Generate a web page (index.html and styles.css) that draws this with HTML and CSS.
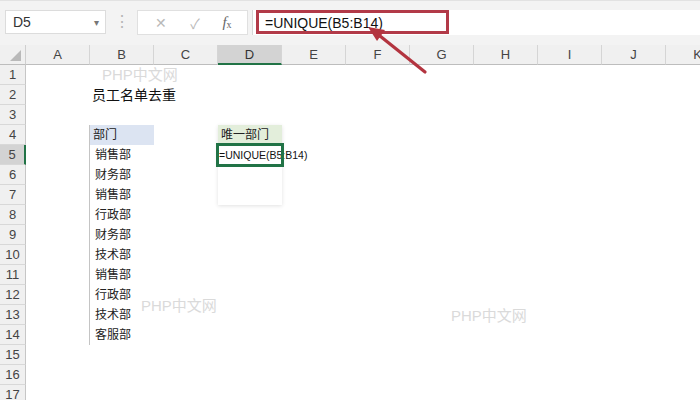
FILE: index.html
```html
<!DOCTYPE html>
<html lang="zh-CN">
<head>
    <meta charset="UTF-8">
    <title>UNIQUE</title>
    <link rel="stylesheet" href="styles.css">
</head>
<body>
    <div class="toolbar">
        <div class="namebox">
            <span>D5</span>
            <span class="caret">&#9662;</span>
        </div>
        <div class="dots">&#8942;</div>
        <div class="fbtns">
            <span class="fbtn">&#10005;</span>
            <span class="fbtn">&#10003;</span>
            <span class="fbtn fx"><i>f</i><sub>x</sub></span>
        </div>
        <div class="formula">
            <span class="ftext">=UNIQUE(B5:B14)</span>
            <div class="redbox"></div>
        </div>
    </div>

    <div class="sheet">
        <div class="corner"><span class="tri"></span></div>
        <div class="ch">A</div>
        <div class="ch">B</div>
        <div class="ch">C</div>
        <div class="ch sel">D</div>
        <div class="ch">E</div>
        <div class="ch">F</div>
        <div class="ch">G</div>
        <div class="ch">H</div>
        <div class="ch">I</div>
        <div class="ch">J</div>
        <div class="ch">K</div>

        <div class="rh">1</div>
        <div class="rh">2</div>
        <div class="cell colB title">员工名单去重</div>
        <div class="rh">3</div>
        <div class="rh">4</div>
        <div class="cell colB dept head-blue">部门</div>
        <div class="cell colD head-green">唯一部门</div>
        <div class="rh sel">5</div>
        <div class="cell colB dept">销售部</div>
        <div class="cell colD active">=UNIQUE(B5:B14)</div>
        <div class="rh">6</div>
        <div class="cell colB dept">财务部</div>
        <div class="rh">7</div>
        <div class="cell colB dept">销售部</div>
        <div class="rh">8</div>
        <div class="cell colB dept">行政部</div>
        <div class="rh">9</div>
        <div class="cell colB dept">财务部</div>
        <div class="rh">10</div>
        <div class="cell colB dept">技术部</div>
        <div class="rh">11</div>
        <div class="cell colB dept">销售部</div>
        <div class="rh">12</div>
        <div class="cell colB dept">行政部</div>
        <div class="rh">13</div>
        <div class="cell colB dept">技术部</div>
        <div class="rh">14</div>
        <div class="cell colB dept">客服部</div>
        <div class="rh">15</div>
        <div class="rh">16</div>
        <div class="rh">17</div>

        <!-- faint frame around the result range D4:D7 -->
        <div class="uniq-frame"></div>
    </div>

    <div class="wm wm1">PHP中文网</div>
    <div class="wm wm2">PHP中文网</div>
    <div class="wm wm3">PHP中文网</div>

    <svg class="arrow" width="700" height="400" viewBox="0 0 700 400">
        <line x1="425" y1="72" x2="380" y2="36" stroke="#b3343f" stroke-width="3.2" stroke-linecap="round"/>
        <polygon points="368,27 385,30 377,41" fill="#b3343f"/>
    </svg>
</body>
</html>
```

FILE: styles.css
```css
body {
    margin: 0;
    width: 700px;
    height: 400px;
    overflow: hidden;
    background: #fff;
    font-family: "Liberation Sans", "Noto Sans CJK SC", sans-serif;
    color: #222;
    position: relative;
}

/* formula bar */
.toolbar {
    height: 45px;
    background: #f3f3f3;
    display: flex;
    align-items: flex-start;
    padding-top: 9px;
    box-sizing: border-box;
    border-top: 1px solid #e2e2e2;
}
.namebox {
    margin-left: 5px;
    width: 101px;
    height: 24px;
    background: #fff;
    border: 1px solid #dcdcdc;
    box-sizing: border-box;
    display: flex;
    align-items: center;
    justify-content: space-between;
    padding: 0 6px 0 7px;
    font-size: 14px;
    color: #333;
}
.caret {
    font-size: 10px;
    color: #777;
}
.dots {
    width: 31px;
    text-align: center;
    color: #b5b5b5;
    font-size: 16px;
    line-height: 24px;
}
.fbtns {
    width: 111px;
    height: 25px;
    background: #fff;
    border: 1px solid #e0e0e0;
    box-sizing: border-box;
    display: flex;
    align-items: center;
    justify-content: space-around;
    padding: 0 4px 0 6px;
    color: #b9b9b9;
    font-size: 14px;
}
.fbtn.fx {
    color: #666;
    font-family: "Liberation Serif", serif;
    font-size: 15px;
}
.fbtn.fx sub {
    font-size: 10px;
    vertical-align: -1px;
}
.formula {
    margin-left: 4px;
    flex: 1;
    height: 25px;
    background: #fff;
    border-left: 1px solid #d6d6d6;
    position: relative;
    display: flex;
    align-items: center;
    padding-left: 12px;
    font-size: 14px;
    color: #111;
}
.redbox {
    position: absolute;
    left: 3px;
    top: 0;
    width: 193px;
    height: 24px;
    border: 3px solid #b23a48;
    box-sizing: border-box;
}

/* grid */
.sheet {
    display: grid;
    grid-template-columns: 26px repeat(11, 64px);
    grid-template-rows: 20px;
    grid-auto-rows: 20px;
    position: relative;
}
.corner {
    background: #f0f0f0;
    border-right: 1px solid #cfcfcf;
    border-bottom: 1px solid #bdbdbd;
    position: relative;
}
.tri {
    position: absolute;
    right: 4px;
    bottom: 3px;
    width: 0;
    height: 0;
    border-left: 11px solid transparent;
    border-bottom: 11px solid #b9b9b9;
}
.ch {
    background: #f0f0f0;
    border-right: 1px solid #d5d5d5;
    border-bottom: 1px solid #bdbdbd;
    text-align: center;
    font-size: 13px;
    line-height: 19px;
    color: #444;
}
.ch.sel {
    background: #d3d3d3;
    border-bottom: 2px solid #217346;
    color: #333;
}
.rh {
    grid-column: 1;
    background: #f0f0f0;
    border-right: 1px solid #c6c6c6;
    border-bottom: 1px solid #d8d8d8;
    text-align: center;
    font-size: 13px;
    line-height: 19px;
    color: #444;
}
.rh.sel {
    background: #d3d3d3;
    border-right: 2px solid #217346;
}
.cell {
    font-size: 12px;
    line-height: 20px;
    white-space: nowrap;
    padding-left: 3px;
    position: relative;
    z-index: 1;
}
.colB {
    grid-column: 3;
}
.colD {
    grid-column: 5;
}
.title {
    font-size: 14px;
    padding-left: 2px;
    color: #111;
}
.dept {
    border-left: 1px solid #c4c4c4;
    margin-left: -1px;
    padding-left: 5px;
}
.head-blue {
    background: #dce4f2;
    padding-left: 3px;
}
.head-green {
    background: #e3eedb;
}
.active {
    font-size: 10.5px;
    padding-left: 1px;
    color: #111;
    outline: 3px solid #217346;
    outline-offset: -1px;
    z-index: 2;
}
.uniq-frame {
    position: absolute;
    grid-column: 5 / 6;
    grid-row: 5 / 9;
    inset: 0;
    box-shadow: 0 1px 4px rgba(0, 0, 0, 0.12);
}

/* watermarks and annotation */
.wm {
    position: absolute;
    font-family: "Liberation Sans", "Noto Sans CJK SC", sans-serif;
    font-size: 15px;
    color: #dadada;
    z-index: 3;
}
.wm1 {
    left: 102px;
    top: 63px;
}
.wm2 {
    left: 141px;
    top: 294px;
}
.wm3 {
    left: 451px;
    top: 304px;
}
.arrow {
    position: absolute;
    left: 0;
    top: 0;
    z-index: 4;
}
```
